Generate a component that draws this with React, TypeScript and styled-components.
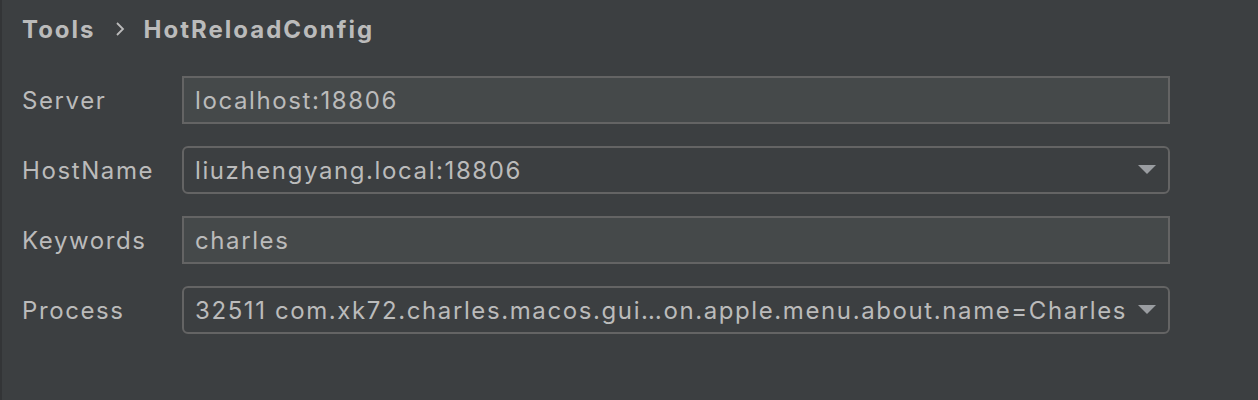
import React from "react";
import styled, { createGlobalStyle } from "styled-components";

const Global = createGlobalStyle`
  html, body { margin: 0; padding: 0; background: #3c3f41; }
  body { font-family: Inter, "Noto Sans", sans-serif; }
`;

const Page = styled.div`
  width: 1258px;
  height: 400px;
  box-sizing: border-box;
  background: #3c3f41;
  border-left: 2px solid #333537;
  padding: 12px 0 0 20px;
  color: #bbbbbb;
`;

const Breadcrumb = styled.div`
  display: flex;
  align-items: center;
  height: 34px;
  font-size: 24px;
  font-weight: 700;
  letter-spacing: 2px;
  color: #bbbbbb;
`;

const Crumb = styled.span``;

const Sep = styled.span`
  display: inline-flex;
  width: 48px;
  justify-content: center;
`;

const Form = styled.div`
  display: grid;
  grid-template-columns: 160px 988px;
  row-gap: 22px;
  margin-top: 30px;
  align-items: center;
`;

const Label = styled.div`
  font-size: 24px;
  letter-spacing: 1.6px;
  color: #bbbbbb;
`;

const Field = styled.div<{ $combo?: boolean }>`
  height: 48px;
  box-sizing: border-box;
  display: flex;
  align-items: center;
  padding: 0 12px 0 11px;
  border: 2px solid #646464;
  border-radius: ${(p) => (p.$combo ? "6px" : "0")};
  background: ${(p) => (p.$combo ? "#3c3f41" : "#45494a")};
  font-size: 24px;
  letter-spacing: 1.6px;
  color: #bbbbbb;
  white-space: nowrap;
  overflow: hidden;
`;

const Value = styled.span`
  flex: 1;
  overflow: hidden;
`;

const Arrow = () => (
  <svg width="18" height="10" viewBox="0 0 18 10" style={{ flexShrink: 0 }}>
    <polygon points="0,0 18,0 9,9" fill="#9a9da1" />
  </svg>
);

export default function App() {
  return (
    <>
      <Global />
      <Page>
        <Breadcrumb>
          <Crumb>Tools</Crumb>
          <Sep>
            <svg width="10" height="14" viewBox="0 0 10 14">
              <polyline points="2,1 8,7 2,13" fill="none" stroke="#bbbbbb" strokeWidth="1.8" />
            </svg>
          </Sep>
          <Crumb>HotReloadConfig</Crumb>
        </Breadcrumb>
        <Form>
          <Label>Server</Label>
          <Field>
            <Value>localhost:18806</Value>
          </Field>
          <Label>HostName</Label>
          <Field $combo>
            <Value>liuzhengyang.local:18806</Value>
            <Arrow />
          </Field>
          <Label>Keywords</Label>
          <Field>
            <Value>charles</Value>
          </Field>
          <Label>Process</Label>
          <Field $combo>
            <Value>32511 com.xk72.charles.macos.gui…on.apple.menu.about.name=Charles</Value>
            <Arrow />
          </Field>
        </Form>
      </Page>
    </>
  );
}
